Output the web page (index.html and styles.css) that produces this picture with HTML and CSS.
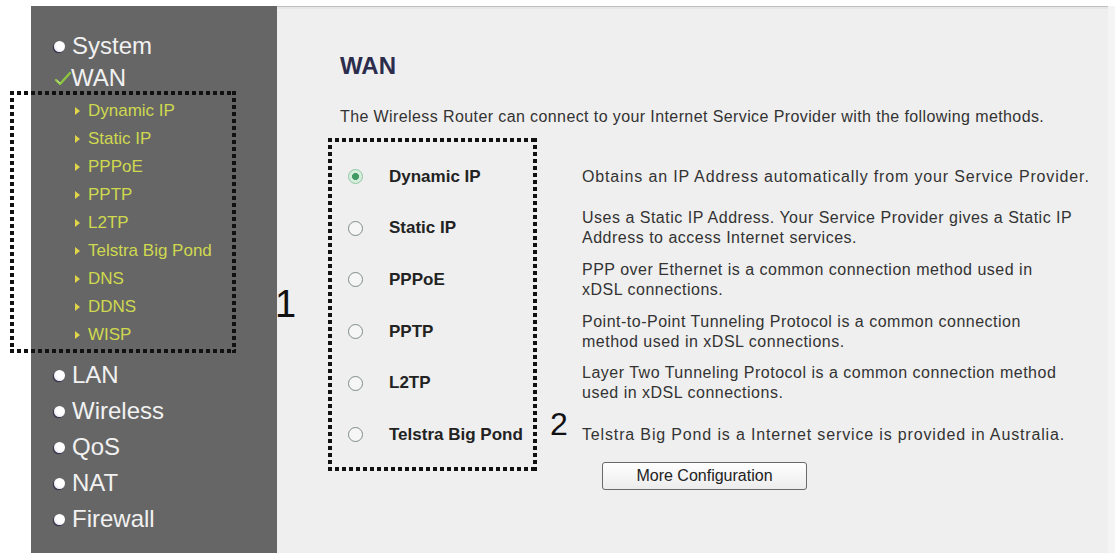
FILE: index.html
```html
<!DOCTYPE html>
<html>
<head>
<meta charset="utf-8">
<link rel="stylesheet" href="styles.css">
</head>
<body>
<div class="screen">
  <div class="page">
    <nav class="side">
      <ul class="menu">
        <li class="main first"><span class="dot"></span>System</li>
        <li class="main active"><svg class="check" width="16" height="15" viewBox="0 0 16 15"><path d="M1 9 L5 13 L15 2" fill="none" stroke="#8dc63f" stroke-width="2.4" stroke-linecap="round" stroke-linejoin="round"/><path d="M2 9.5 L5 12" fill="none" stroke="#d9f0a0" stroke-width="1" stroke-linecap="round"/></svg>WAN</li>
        <li class="sub subfirst"><span class="arrow"></span>Dynamic IP</li>
        <li class="sub"><span class="arrow"></span>Static IP</li>
        <li class="sub"><span class="arrow"></span>PPPoE</li>
        <li class="sub"><span class="arrow"></span>PPTP</li>
        <li class="sub"><span class="arrow"></span>L2TP</li>
        <li class="sub"><span class="arrow"></span>Telstra Big Pond</li>
        <li class="sub"><span class="arrow"></span>DNS</li>
        <li class="sub"><span class="arrow"></span>DDNS</li>
        <li class="sub"><span class="arrow"></span>WISP</li>
        <li class="main after"><span class="dot"></span>LAN</li>
        <li class="main"><span class="dot"></span>Wireless</li>
        <li class="main"><span class="dot"></span>QoS</li>
        <li class="main"><span class="dot"></span>NAT</li>
        <li class="main"><span class="dot"></span>Firewall</li>
      </ul>
    </nav>
    <main class="content">
      <h1 class="title">WAN</h1>
      <p class="intro">The Wireless Router can connect to your Internet Service Provider with the following methods.</p>
      <div class="methods">
        <span class="radio on"></span><span class="label">Dynamic IP</span><span class="desc wide">Obtains an IP Address automatically from your Service Provider.</span>
        <span class="radio"></span><span class="label">Static IP</span><span class="desc">Uses a Static IP Address. Your Service Provider gives a Static IP<br>Address to access Internet services.</span>
        <span class="radio"></span><span class="label">PPPoE</span><span class="desc">PPP over Ethernet is a common connection method used in<br>xDSL connections.</span>
        <span class="radio"></span><span class="label">PPTP</span><span class="desc">Point-to-Point Tunneling Protocol is a common connection<br>method used in xDSL connections.</span>
        <span class="radio"></span><span class="label">L2TP</span><span class="desc">Layer Two Tunneling Protocol is a common connection method<br>used in xDSL connections.</span>
        <span class="radio"></span><span class="label">Telstra Big Pond</span><span class="desc wide">Telstra Big Pond is a Internet service is provided in Australia.</span>
      </div>
      <button class="btn">More Configuration</button>
    </main>
  </div>
  <div class="dotbox box1"></div>
  <div class="dotbox box2"></div>
  <div class="num num1">1</div>
  <div class="num num2">2</div>
</div>
</body>
</html>
```
FILE: styles.css
```css
* { box-sizing: border-box; }
html, body { margin: 0; padding: 0; background: #ffffff; }
body { font-family: "Liberation Sans", Arial, sans-serif; }

.screen {
  position: relative;
  width: 1115px;
  height: 553px;
  overflow: hidden;
  background: #ffffff;
}

.page {
  display: flex;
  margin-left: 31px;
  padding-top: 6px;
  height: 553px;
}

.side {
  width: 246px;
  flex: none;
  background: #666666;
  height: 100%;
}

.menu {
  list-style: none;
  margin: 0;
  padding: 24px 0 0 0;
}

.main {
  display: flex;
  align-items: center;
  height: 36px;
  padding-left: 23px;
  font-size: 24px;
  color: #f1f1f1;
  white-space: nowrap;
}
.main.first, .main.active { height: 32px; }
.main.after { margin-top: 8px; }

.dot {
  width: 11px;
  height: 11px;
  border-radius: 50%;
  background: radial-gradient(circle at 60% 38%, #ffffff 45%, #e4e4f4 80%);
  box-shadow: -1px 1px 1px #2e2e48;
  margin-right: 7px;
  flex: none;
}

.check { margin: 0 0 0 1px; flex: none; }

.sub {
  display: flex;
  align-items: center;
  height: 28px;
  padding-left: 44px;
  font-size: 17px;
  color: #cfd94f;
  white-space: nowrap;
}
.sub.subfirst { margin-top: 3px; }

.arrow {
  width: 0;
  height: 0;
  border-top: 4.5px solid transparent;
  border-bottom: 4.5px solid transparent;
  border-left: 5px solid #e3d54a;
  margin-right: 8px;
  flex: none;
}

.content {
  flex: 1;
  background: #efefef;
  box-shadow: inset 0 1px 0 #bfbfbf, inset 0 3px 0 #e6e6e6;
  border-right: 7px solid #f4f4f4;
  padding: 46px 0 0 63px;
  color: #333333;
}

.title {
  margin: 0;
  font-size: 24px;
  line-height: 28px;
  font-weight: bold;
  color: #2c2c4c;
}

.intro {
  margin: 27px 0 0 0;
  font-size: 16px;
  line-height: 20px;
  letter-spacing: 0.4px;
  white-space: nowrap;
}

.methods {
  display: grid;
  grid-template-columns: 42px 193px 1fr;
  grid-auto-rows: 51.6px;
  align-items: center;
  margin: 24px 0 0 7px;
}

.radio {
  width: 15px;
  height: 15px;
  border-radius: 50%;
  border: 1.5px solid #7f8b8b;
  background: #f6f6f6;
  margin-left: 1px;
}
.radio.on {
  border-color: #8fc7a2;
  background: radial-gradient(circle, #3f9a63 0 3.2px, #d6eedd 3.8px);
}

.label {
  font-size: 17px;
  font-weight: bold;
  color: #222222;
  white-space: nowrap;
}

.desc {
  font-size: 16px;
  line-height: 20px;
  letter-spacing: 0.5px;
  color: #333333;
  white-space: nowrap;
}
.desc.wide { letter-spacing: 0.85px; }

.btn {
  display: block;
  margin: 1px 0 0 262px;
  width: 205px;
  height: 28px;
  font-family: "Liberation Sans", Arial, sans-serif;
  font-size: 16px;
  color: #222222;
  border: 1px solid #6a6a6a;
  border-radius: 3px;
  background: linear-gradient(#ffffff, #ececec);
  padding: 0;
}

.dotbox {
  position: absolute;
  background:
    linear-gradient(to right, #111 4px, transparent 4px) 0 0 / 7px 4px repeat-x,
    linear-gradient(to right, #111 4px, transparent 4px) 0 100% / 7px 4px repeat-x,
    linear-gradient(to bottom, #111 4px, transparent 4px) 0 0 / 4px 7px repeat-y,
    linear-gradient(to bottom, #111 4px, transparent 4px) 100% 0 / 4px 7px repeat-y;
}
.box1 { left: 10px; top: 91px; width: 226px; height: 262px; }
.box2 { left: 328px; top: 138px; width: 209px; height: 333px; }

.num {
  position: absolute;
  line-height: 1;
  color: #111111;
  font-family: "Liberation Sans", Arial, sans-serif;
}
.num1 { left: 275px; top: 285px; font-size: 38px; }
.num2 { left: 550px; top: 408px; font-size: 32px; }
```
